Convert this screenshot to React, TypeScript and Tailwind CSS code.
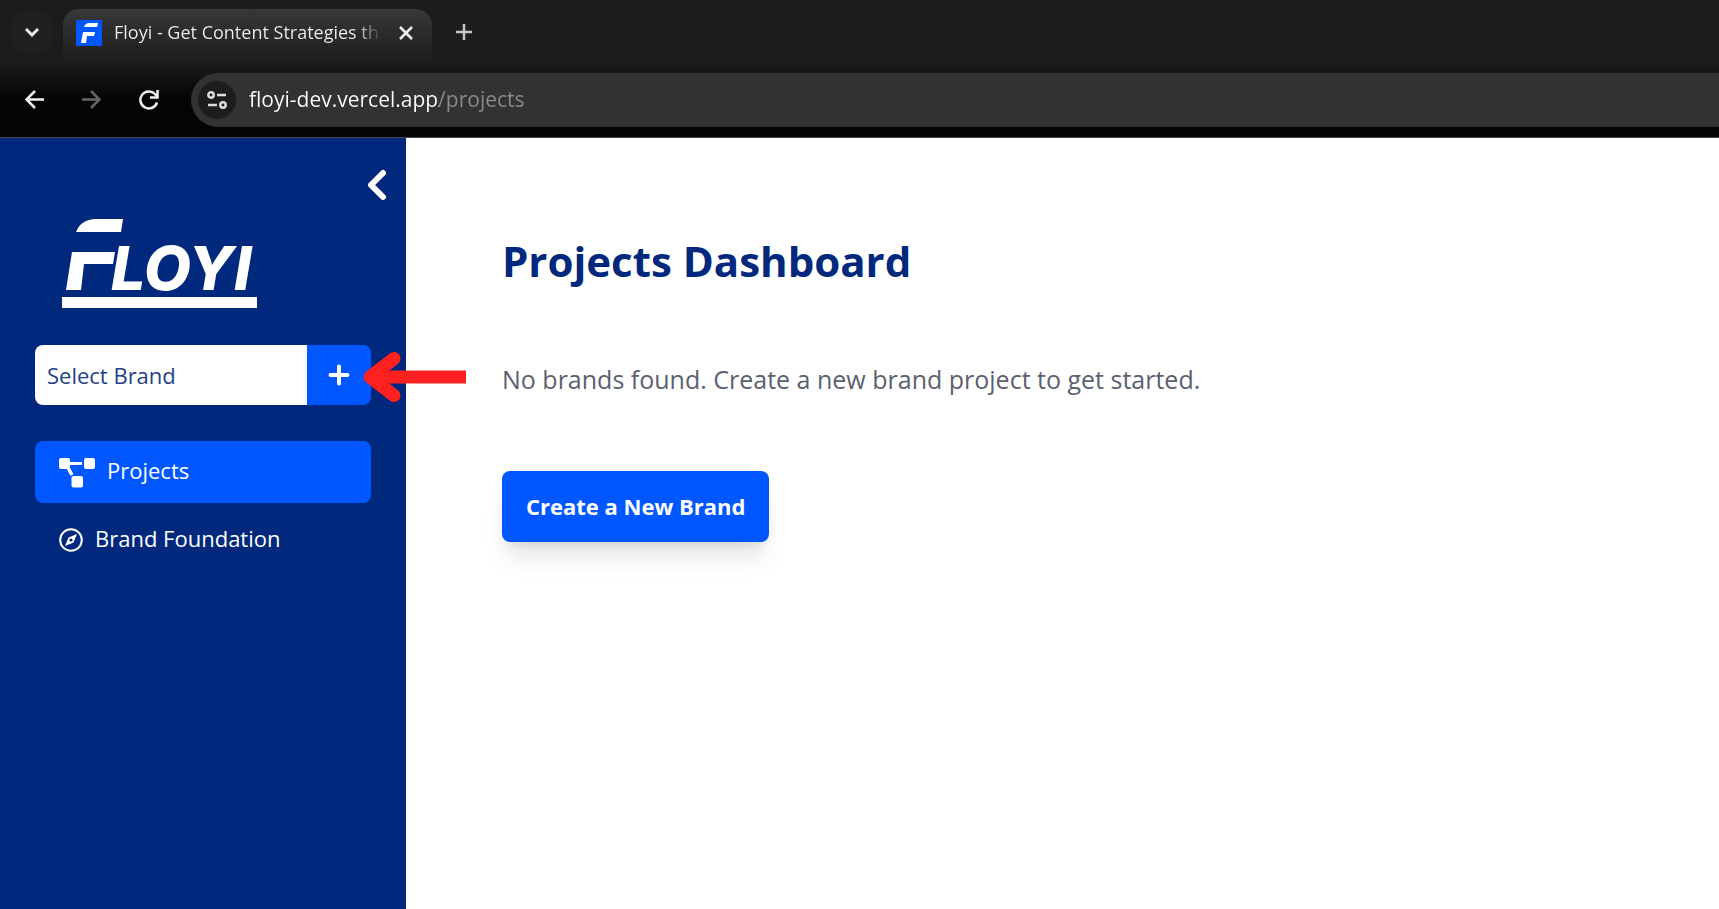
import {useState} from "react"

const FloyiLogo = () => (
  <svg viewBox="0 0 196 90" className="h-[90px] w-[196px]" fill="white" role="img" aria-label="Floyi">
    <path d="M14 13C17 5 24 0 34 0H61L59 13Z" />
    <path d="M10 33H53L51 45H22L19 71H4Z" />
    <text x="49" y="71" fontFamily="Inter, sans-serif" fontSize="61" fontWeight="800" fontStyle="italic">LOYI</text>
    <rect x="0" y="78" width="195" height="11" />
  </svg>
)

const Favicon = () => (
  <svg viewBox="0 0 26 26" className="size-[26px] shrink-0" aria-hidden="true">
    <rect width="26" height="26" fill="#0057ff" />
    <path d="M8 7C9 4 11 3 13 3H22L21 7Z" fill="white" />
    <path d="M7 12H19L18 16H11L10 23H5Z" fill="white" />
  </svg>
)

const ProjectsIcon = () => (
  <svg viewBox="0 0 36 30" className="h-[30px] w-9 shrink-0" fill="white" aria-hidden="true">
    <rect x="0" y="0" width="11" height="11" rx="2" />
    <rect x="25" y="0" width="11" height="11" rx="2" />
    <rect x="12.500" y="18" width="11.500" height="11.500" rx="2" />
    <path d="M9 5.500H23" stroke="white" strokeWidth="3" />
    <path d="M8 8L13 17" stroke="white" strokeWidth="3.500" />
  </svg>
)

const CompassIcon = () => (
  <svg viewBox="0 0 24 24" className="size-6 shrink-0" fill="none" stroke="white" strokeWidth="2" aria-hidden="true">
    <circle cx="12" cy="12" r="10.800" />
    <path d="M18 6L14.500 14.500L6 18L9.500 9.500Z" fill="white" stroke="none" />
    <circle cx="12" cy="12" r="1.600" fill="#00287d" stroke="none" />
  </svg>
)

const BrowserBar = () => {
  const [url,setUrl] = useState("floyi-dev.vercel.app/projects")
  return <header className="border-b border-[#4a4a4a] bg-[linear-gradient(180deg,#1c1c1c_0px,#1c1c1c_62px,#050505_98px,#040404_100%)]">
    <div className="flex h-16 items-center">
      <button aria-label="Search tabs" className="ml-[11px] flex size-[42px] items-center justify-center rounded-2xl bg-[#202020]">
        <svg viewBox="0 0 14 9" className="h-[9px] w-[14px]" fill="none" stroke="#e8e8e8" strokeWidth="3">
          <path d="M1 1L7 7L13 1" />
        </svg>
      </button>
      <div className="ml-[10px] flex h-[55px] w-[369px] items-center self-end rounded-t-2xl bg-linear-to-b from-[#383838] to-[#1c1c1c] pb-2 pl-[13px]">
        <Favicon />
        <span className="ml-3 w-[266px] whitespace-nowrap bg-[linear-gradient(90deg,#f0f0f0_242px,#383838_266px)] bg-clip-text text-[18px] text-transparent">Floyi - Get Content Strategies th</span>
        <button aria-label="Close tab" className="ml-[19px]">
          <svg viewBox="0 0 14 14" className="size-[14px]" stroke="#f0f0f0" strokeWidth="2.500">
            <path d="M1 1L13 13M13 1L1 13" />
          </svg>
        </button>
      </div>
      <button aria-label="New tab" className="ml-6">
        <svg viewBox="0 0 16 16" className="size-4" stroke="#c4c7cc" strokeWidth="2.500">
          <path d="M8 0V16M0 8H16" />
        </svg>
      </button>
    </div>
    <div className="flex h-[73px] items-center pb-0.5">
      <nav aria-label="History" className="flex items-center gap-[38px] pl-[25px]">
        <button aria-label="Back">
          <svg viewBox="0 0 19 19" className="size-[19px]" fill="none" stroke="#f0f0f0" strokeWidth="2.500">
            <path d="M19 9.500H2M10 1L1.500 9.500L10 18" />
          </svg>
        </button>
        <button aria-label="Forward">
          <svg viewBox="0 0 19 19" className="size-[19px]" fill="none" stroke="#65656a" strokeWidth="2.500">
            <path d="M0 9.500H17M9 1L17.500 9.500L9 18" />
          </svg>
        </button>
        <button aria-label="Reload">
          <svg viewBox="0 0 20 20" className="size-5" fill="none" stroke="#f0f0f0" strokeWidth="2.500">
            <path d="M18 12.500A8.500 8.500 0 1 1 16 4L18 6.500" />
            <path d="M18.500 0V7.500H11" />
          </svg>
        </button>
      </nav>
      <div className="ml-8 flex h-[54px] flex-1 items-center rounded-l-full bg-[#323232] pl-[7px]">
        <button aria-label="View site information" className="flex size-[38px] items-center justify-center rounded-full bg-[#1d1d1d]">
          <svg viewBox="0 0 20 18" className="h-[18px] w-5" fill="none" stroke="#dcdcdc" strokeWidth="2.500">
            <circle cx="4" cy="4" r="2.700" />
            <path d="M10 4H19M1 14H10" />
            <circle cx="16" cy="14" r="2.700" />
          </svg>
        </button>
        <input aria-label="Address" value={url} onChange={(e) => setUrl(e.target.value)} spellCheck={false}
        className="ml-[13px] flex-1 bg-[linear-gradient(90deg,#ffffff_190px,#8b8b90_190px)] bg-clip-text text-[21px] text-transparent outline-none" />
      </div>
    </div>
  </header>
}

const Sidebar = () => {
  const [brand,setBrand] = useState("")
  return <aside className="flex w-[406px] shrink-0 flex-col bg-[#00287d] px-[35px] text-white">
    <button aria-label="Collapse sidebar" className="-mr-4 mt-[31px] self-end">
      <svg viewBox="0 0 20 32" className="h-8 w-5" fill="none" stroke="white" strokeWidth="6" strokeLinecap="round" strokeLinejoin="round">
        <path d="M16 4L4 16L16 28" />
      </svg>
    </button>
    <a href="#" className="ml-[27px] mt-[18px] self-start"><FloyiLogo /></a>
    <div className="relative mt-9 flex h-[60px]">
      <select aria-label="Brand" value={brand} onChange={(e) => setBrand(e.target.value)}
      className="min-w-0 flex-1 appearance-none rounded-l-lg bg-white px-3 text-[22px] text-[#1f3f88]">
        <option value="">Select Brand</option>
      </select>
      <button aria-label="Add brand" className="flex w-16 items-center justify-center rounded-r-lg bg-[#0057ff]">
        <svg viewBox="0 0 22 22" className="size-[22px]" stroke="white" strokeWidth="4" strokeLinecap="round">
          <path d="M11 2.500V19.500M2.500 11H19.500" />
        </svg>
      </button>
      <svg viewBox="0 0 103 50" className="absolute -right-[95px] top-[7px] h-[50px] w-[103px]" fill="none" stroke="#ff2020" strokeWidth="13" aria-hidden="true">
        <path d="M103 25H10" />
        <path d="M31 6.500L7 25L31 43.500" strokeLinecap="round" strokeLinejoin="round" />
      </svg>
    </div>
    <nav aria-label="Main" className="mt-9 flex flex-col text-[22px]">
      <a href="#projects" className="flex h-[62px] items-center gap-3 rounded-lg bg-[#0057ff] px-6 pt-0.5">
        <ProjectsIcon />
        <span className="pb-1.5">Projects</span>
      </a>
      <a href="#foundation" className="mt-[6px] flex h-[62px] items-center gap-3 px-6">
        <CompassIcon />
        <span className="pb-1">Brand Foundation</span>
      </a>
    </nav>
  </aside>
}

const App = () => {
  return <div className="flex min-h-screen flex-col bg-white font-['Open_Sans','Noto_Sans',sans-serif]">
    <BrowserBar />
    <div className="flex flex-1">
      <Sidebar />
      <main className="flex flex-1 flex-col items-start px-24 pt-[93px]">
        <h1 className="text-[42px] font-bold leading-[60px] text-[#00287d]">Projects Dashboard</h1>
        <p className="mt-[68px] text-[25px] leading-10 text-[#5b6170]">No brands found. Create a new brand project to get started.</p>
        <button className="mt-[72px] h-[71px] rounded-lg bg-[#0057ff] px-6 text-[22px] font-bold text-white shadow-xl">Create a New Brand</button>
      </main>
    </div>
  </div>
}
export default App
